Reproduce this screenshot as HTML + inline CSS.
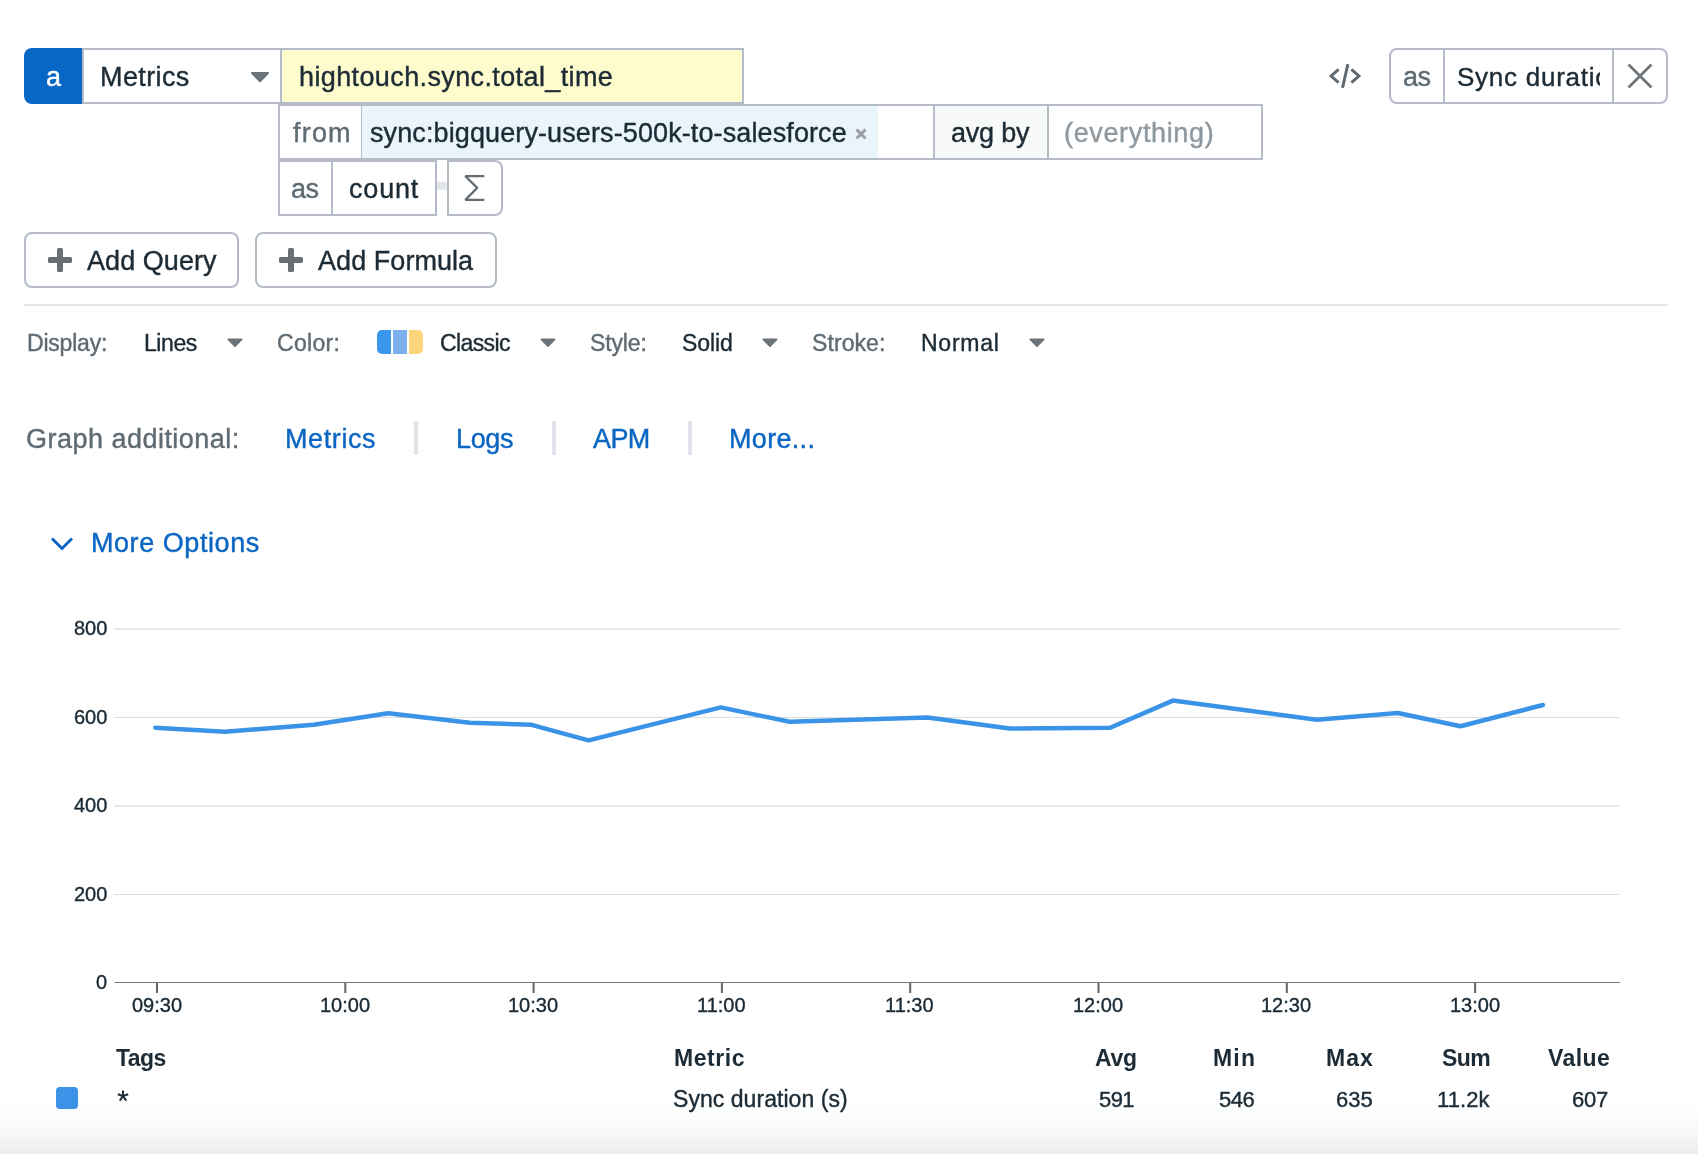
<!DOCTYPE html>
<html><head><meta charset="utf-8">
<style>
html,body{margin:0;padding:0;background:#fff;}
body{width:1698px;height:1154px;position:relative;overflow:hidden;font-family:"Liberation Sans",sans-serif;}
.t{position:absolute;white-space:pre;line-height:1;will-change:transform;-webkit-text-stroke:0.4px currentColor;}
.b{position:absolute;box-sizing:border-box;}
.bd{border:2px solid #b6bbca;}
</style></head><body>
<!-- bottom gradient -->
<div class="b" style="left:0;top:1098px;width:1698px;height:56px;background:linear-gradient(#ffffff 0%,#fafbfb 40%,#f3f4f4 75%,#eeeeee 100%);"></div>

<!-- query row -->
<div class="b" style="left:24px;top:48px;width:58px;height:56px;background:#0667c5;border-radius:8px 0 0 8px;"></div>
<div class="b bd" style="left:82px;top:48px;width:200px;height:56px;background:#fff;"></div>
<svg class="b" style="left:251px;top:72px;" width="18" height="11" viewBox="0 0 18 11"><path d="M1 1H17L9 9.3Z" fill="#6b737a" stroke="#6b737a" stroke-width="2" stroke-linejoin="round"/></svg>
<div class="b bd" style="left:280px;top:48px;width:464px;height:56px;background:#fefccc;"></div>

<!-- from row -->
<div class="b bd" style="left:278px;top:104px;width:985px;height:56px;background:#fff;"></div>
<div class="b" style="left:361px;top:106px;width:1px;height:52px;background:#b6bbca;"></div>
<div class="b" style="left:362px;top:106px;width:516px;height:52px;background:#eaf4fb;"></div>
<div class="b" style="left:933px;top:106px;width:2px;height:52px;background:#b6bbca;"></div>
<div class="b" style="left:935px;top:106px;width:112px;height:52px;background:#f8f9f9;"></div>
<div class="b" style="left:1047px;top:106px;width:2px;height:52px;background:#b6bbca;"></div>
<svg class="b" style="left:855px;top:127.5px;" width="12" height="12" viewBox="0 0 12 12"><path d="M1.5 1.5L10.5 10.5M10.5 1.5L1.5 10.5" stroke="#9a9ea4" stroke-width="3" stroke-linecap="butt"/></svg>

<!-- as row -->
<div class="b bd" style="left:278px;top:160px;width:159px;height:56px;background:#fff;"></div>
<div class="b" style="left:331px;top:162px;width:2px;height:52px;background:#b6bbca;"></div>
<div class="b" style="left:437px;top:182px;width:10px;height:8px;background:#e2e5ec;"></div>
<div class="b bd" style="left:447px;top:160px;width:56px;height:56px;background:#fff;border-radius:0 8px 8px 0;"></div>
<svg class="b" style="left:462px;top:174px;" width="24" height="28" viewBox="0 0 24 28"><path d="M22.3 2.1H3.3L15.3 13.9L3.3 25.9H22.3" fill="none" stroke="#646c72" stroke-width="2.2" stroke-linejoin="bevel"/></svg>

<!-- top right -->
<svg class="b" style="left:1328px;top:63px;" width="34" height="26" viewBox="0 0 34 26"><path d="M10.6 6.3L3.1 13L10.6 19.7M23.4 6.3L30.9 13L23.4 19.7M19.9 1.2L14.5 24.9" fill="none" stroke="#5f6a72" stroke-width="3"/></svg>
<div class="b bd" style="left:1389px;top:48px;width:279px;height:56px;background:#fff;border-radius:8px;"></div>
<div class="b" style="left:1443px;top:50px;width:2px;height:52px;background:#b6bbca;"></div>
<div class="b" style="left:1612px;top:50px;width:2px;height:52px;background:#b6bbca;"></div>
<div class="b" style="left:1445px;top:50px;width:155px;height:52px;overflow:hidden;">
  <div class="t" id="syncdur" style="left:11.5px;top:14px;font-size:26px;color:#1c2b35;letter-spacing:0.75px;">Sync duration (s)</div>
</div>
<svg class="b" style="left:1627px;top:63px;" width="26" height="26" viewBox="0 0 26 26"><path d="M1.5 1.5L24.5 24.5M24.5 1.5L1.5 24.5" stroke="#6c7479" stroke-width="2.6"/></svg>

<!-- buttons -->
<div class="b bd" style="left:24px;top:232px;width:215px;height:56px;background:#fff;border-radius:8px;"></div>
<div class="b bd" style="left:255px;top:232px;width:242px;height:56px;background:#fff;border-radius:8px;"></div>
<svg class="b" style="left:48px;top:248px;" width="24" height="24" viewBox="0 0 24 24"><rect x="0" y="9" width="24" height="6" rx="1.6" fill="#687076"/><rect x="9" y="0" width="6" height="24" rx="1.6" fill="#687076"/></svg>
<svg class="b" style="left:279px;top:248px;" width="24" height="24" viewBox="0 0 24 24"><rect x="0" y="9" width="24" height="6" rx="1.6" fill="#687076"/><rect x="9" y="0" width="6" height="24" rx="1.6" fill="#687076"/></svg>

<div class="b" style="left:24px;top:304px;width:1644px;height:2px;background:#e3e6ec;"></div>

<!-- display row -->
<svg class="b" style="left:227px;top:338px;" width="16" height="10" viewBox="0 0 16 10"><path d="M1.4 1.4H14.6L8 8Z" fill="#6b737a" stroke="#6b737a" stroke-width="1.8" stroke-linejoin="round"/></svg>
<svg class="b" style="left:540px;top:338px;" width="16" height="10" viewBox="0 0 16 10"><path d="M1.4 1.4H14.6L8 8Z" fill="#6b737a" stroke="#6b737a" stroke-width="1.8" stroke-linejoin="round"/></svg>
<svg class="b" style="left:762px;top:338px;" width="16" height="10" viewBox="0 0 16 10"><path d="M1.4 1.4H14.6L8 8Z" fill="#6b737a" stroke="#6b737a" stroke-width="1.8" stroke-linejoin="round"/></svg>
<svg class="b" style="left:1029px;top:338px;" width="16" height="10" viewBox="0 0 16 10"><path d="M1.4 1.4H14.6L8 8Z" fill="#6b737a" stroke="#6b737a" stroke-width="1.8" stroke-linejoin="round"/></svg>
<div class="b" style="left:377px;top:330px;width:46px;height:24px;border-radius:5px;overflow:hidden;background:#fff;">
  <div class="b" style="left:0;top:0;width:14px;height:24px;background:#3a96ea;"></div>
  <div class="b" style="left:16px;top:0;width:14px;height:24px;background:#7db0ef;"></div>
  <div class="b" style="left:32px;top:0;width:14px;height:24px;background:#fdd57b;"></div>
</div>

<!-- graph additional separators -->
<div class="b" style="left:414px;top:421px;width:4px;height:34px;background:#e0e3ea;"></div>
<div class="b" style="left:552px;top:421px;width:4px;height:34px;background:#e0e3ea;"></div>
<div class="b" style="left:688px;top:421px;width:4px;height:34px;background:#e0e3ea;"></div>

<!-- chevron -->
<svg class="b" style="left:50px;top:536px;" width="24" height="16" viewBox="0 0 24 16"><path d="M2 2.5L12 12.5L22 2.5" fill="none" stroke="#0a66c2" stroke-width="3"/></svg>

<!-- chart -->
<svg class="b" style="left:0;top:0;" width="1698" height="1154" viewBox="0 0 1698 1154">
  <rect x="114" y="628" width="1506" height="2" fill="#e9e9e9"/>
  <rect x="114" y="717" width="1506" height="1" fill="#dcdfe0"/>
  <rect x="114" y="805" width="1506" height="2" fill="#e9e9e9"/>
  <rect x="114" y="894" width="1506" height="1" fill="#dcdfe0"/>
  <rect x="114.5" y="982" width="1505.5" height="1" fill="#6f777d"/>
  <g stroke="#5f676d" stroke-width="2">
    <line x1="157" y1="983" x2="157" y2="993"/>
    <line x1="345.3" y1="983" x2="345.3" y2="993"/>
    <line x1="533.6" y1="983" x2="533.6" y2="993"/>
    <line x1="721.9" y1="983" x2="721.9" y2="993"/>
    <line x1="910.2" y1="983" x2="910.2" y2="993"/>
    <line x1="1098.5" y1="983" x2="1098.5" y2="993"/>
    <line x1="1286.8" y1="983" x2="1286.8" y2="993"/>
    <line x1="1475.1" y1="983" x2="1475.1" y2="993"/>
  </g>
  <polyline fill="none" stroke="#3b93e7" stroke-width="4.5" stroke-linecap="round" stroke-linejoin="round"
   points="155.3,727.7 224.8,731.8 313.7,724.8 388.2,713.3 469.8,722.7 531.6,724.8 588.5,740.4 720.8,707.4 789.7,721.8 927.5,717.4 1009.9,728.6 1110.1,727.7 1172.8,700.6 1316.8,719.8 1398,713 1460.5,726.2 1542.9,705"/>
</svg>

<!-- legend -->
<div class="b" style="left:56px;top:1087px;width:22px;height:22px;background:#3b93e7;border-radius:4px;"></div>

<svg class="b" style="left:117px;top:1089.5px;" width="12" height="12" viewBox="0 0 12 12"><path d="M6 0.5V6M6 6L0.8 4.3M6 6L11.2 4.3M6 6L2.8 10.6M6 6L9.2 10.6" stroke="#1c2b35" stroke-width="2" fill="none"/></svg>
<div class="t" style="left:46.20px;top:64.02px;font-size:27px;color:#ffffff;">a</div>
<div class="t" style="left:100.10px;top:64.02px;font-size:27px;color:#1c2b35;letter-spacing:0.384px;">Metrics</div>
<div class="t" style="left:298.60px;top:64.02px;font-size:27px;color:#1c2b35;letter-spacing:0.381px;">hightouch.sync.total_time</div>
<div class="t" style="left:293.20px;top:120.02px;font-size:27px;color:#5f6b73;letter-spacing:1.200px;">from</div>
<div class="t" style="left:369.60px;top:120.02px;font-size:27px;color:#1c2b35;letter-spacing:0.109px;">sync:bigquery-users-500k-to-salesforce</div>
<div class="t" style="left:951.00px;top:120.02px;font-size:27px;color:#1c2b35;letter-spacing:-0.210px;">avg by</div>
<div class="t" style="left:1064.30px;top:120.02px;font-size:27px;color:#8f989f;letter-spacing:0.649px;">(everything)</div>
<div class="t" style="left:291.24px;top:176.01px;font-size:27px;color:#5f6b73;letter-spacing:-0.600px;">as</div>
<div class="t" style="left:348.90px;top:176.01px;font-size:27px;color:#1c2b35;letter-spacing:0.813px;">count</div>
<div class="t" style="left:1402.54px;top:64.02px;font-size:27px;color:#5f6b73;letter-spacing:-0.600px;">as</div>
<div class="t" style="left:87.10px;top:248.01px;font-size:27px;color:#1c2b35;letter-spacing:0.054px;">Add Query</div>
<div class="t" style="left:318.40px;top:248.01px;font-size:27px;color:#1c2b35;letter-spacing:0.055px;">Add Formula</div>
<div class="t" style="left:27.00px;top:332.01px;font-size:23px;color:#5f6b73;letter-spacing:-0.202px;">Display:</div>
<div class="t" style="left:143.60px;top:332.01px;font-size:23px;color:#1c2b35;letter-spacing:-0.421px;">Lines</div>
<div class="t" style="left:276.70px;top:332.01px;font-size:23px;color:#5f6b73;letter-spacing:0.328px;">Color:</div>
<div class="t" style="left:440.14px;top:332.01px;font-size:23px;color:#1c2b35;letter-spacing:-0.600px;">Classic</div>
<div class="t" style="left:589.60px;top:332.01px;font-size:23px;color:#5f6b73;letter-spacing:-0.126px;">Style:</div>
<div class="t" style="left:681.50px;top:332.01px;font-size:23px;color:#1c2b35;letter-spacing:-0.088px;">Solid</div>
<div class="t" style="left:811.70px;top:332.01px;font-size:23px;color:#5f6b73;letter-spacing:0.088px;">Stroke:</div>
<div class="t" style="left:921.30px;top:332.01px;font-size:23px;color:#1c2b35;letter-spacing:0.738px;">Normal</div>
<div class="t" style="left:25.90px;top:426.01px;font-size:27px;color:#5f6b73;letter-spacing:0.479px;">Graph additional:</div>
<div class="t" style="left:285.20px;top:426.01px;font-size:27px;color:#0a66c2;letter-spacing:0.600px;">Metrics</div>
<div class="t" style="left:455.70px;top:426.01px;font-size:27px;color:#0a66c2;letter-spacing:-0.349px;">Logs</div>
<div class="t" style="left:592.74px;top:426.01px;font-size:27px;color:#0a66c2;letter-spacing:-0.600px;">APM</div>
<div class="t" style="left:729.20px;top:426.01px;font-size:27px;color:#0a66c2;letter-spacing:0.314px;">More...</div>
<div class="t" style="left:90.50px;top:530.01px;font-size:27px;color:#0a66c2;letter-spacing:0.558px;">More Options</div>
<div class="t" style="left:116.21px;top:1047.01px;font-size:23px;font-weight:700;-webkit-text-stroke:0;color:#1c2b35;letter-spacing:-0.600px;">Tags</div>
<div class="t" style="left:674.10px;top:1047.01px;font-size:23px;font-weight:700;-webkit-text-stroke:0;color:#1c2b35;letter-spacing:0.550px;">Metric</div>
<div class="t" style="left:1094.50px;top:1047.01px;font-size:23px;font-weight:700;-webkit-text-stroke:0;color:#1c2b35;letter-spacing:-0.274px;">Avg</div>
<div class="t" style="left:1212.53px;top:1047.01px;font-size:23px;font-weight:700;-webkit-text-stroke:0;color:#1c2b35;letter-spacing:1.200px;">Min</div>
<div class="t" style="left:1325.50px;top:1047.01px;font-size:23px;font-weight:700;-webkit-text-stroke:0;color:#1c2b35;letter-spacing:1.025px;">Max</div>
<div class="t" style="left:1442.15px;top:1047.01px;font-size:23px;font-weight:700;-webkit-text-stroke:0;color:#1c2b35;letter-spacing:-0.600px;">Sum</div>
<div class="t" style="left:1547.50px;top:1047.01px;font-size:23px;font-weight:700;-webkit-text-stroke:0;color:#1c2b35;letter-spacing:0.424px;">Value</div>
<div class="t" style="left:673.30px;top:1088.01px;font-size:23px;color:#1c2b35;letter-spacing:0.051px;">Sync duration (s)</div>
<div class="t" style="left:1098.86px;top:1089.01px;font-size:22px;color:#1c2b35;letter-spacing:-0.600px;">591</div>
<div class="t" style="left:1218.50px;top:1089.01px;font-size:22px;color:#1c2b35;letter-spacing:-0.485px;">546</div>
<div class="t" style="left:1335.50px;top:1089.01px;font-size:22px;color:#1c2b35;letter-spacing:0.015px;">635</div>
<div class="t" style="left:1436.50px;top:1089.01px;font-size:22px;color:#1c2b35;letter-spacing:0.079px;">11.2k</div>
<div class="t" style="left:1572.00px;top:1089.01px;font-size:22px;color:#1c2b35;letter-spacing:-0.235px;">607</div>
<div class="t" style="left:74.05px;top:618.01px;font-size:20px;color:#1c2b35;">800</div>
<div class="t" style="left:74.05px;top:706.70px;font-size:20px;color:#1c2b35;">600</div>
<div class="t" style="left:74.05px;top:795.01px;font-size:20px;color:#1c2b35;">400</div>
<div class="t" style="left:74.05px;top:884.01px;font-size:20px;color:#1c2b35;">200</div>
<div class="t" style="left:96.30px;top:971.81px;font-size:20px;color:#1c2b35;">0</div>
<div class="t" style="left:132.04px;top:995.01px;font-size:20px;color:#1c2b35;">09:30</div>
<div class="t" style="left:319.84px;top:995.01px;font-size:20px;color:#1c2b35;">10:00</div>
<div class="t" style="left:508.14px;top:995.01px;font-size:20px;color:#1c2b35;">10:30</div>
<div class="t" style="left:697.18px;top:995.01px;font-size:20px;color:#1c2b35;">11:00</div>
<div class="t" style="left:885.48px;top:995.01px;font-size:20px;color:#1c2b35;">11:30</div>
<div class="t" style="left:1073.04px;top:995.01px;font-size:20px;color:#1c2b35;">12:00</div>
<div class="t" style="left:1261.34px;top:995.01px;font-size:20px;color:#1c2b35;">12:30</div>
<div class="t" style="left:1449.64px;top:995.01px;font-size:20px;color:#1c2b35;">13:00</div>
</body></html>
